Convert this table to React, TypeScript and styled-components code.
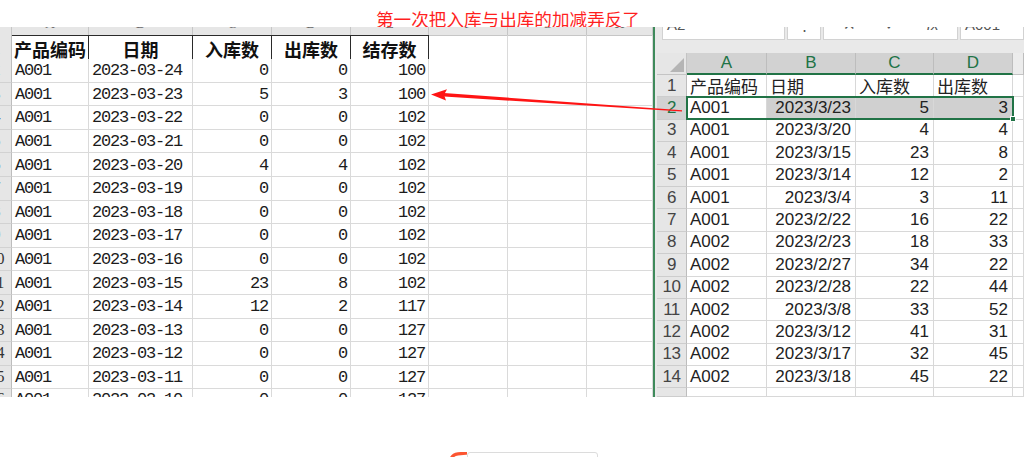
import React from "react";
import styled, { createGlobalStyle } from "styled-components";

const GlobalStyle = createGlobalStyle`
  html, body { margin: 0; padding: 0; background: #ffffff; }
  body { width: 1024px; height: 457px; overflow: hidden; font-family: "Liberation Sans", "Noto Sans CJK SC", sans-serif; }
  *, *::before, *::after { box-sizing: border-box; }
`;

const Page = styled.div`
  position: relative;
  width: 1024px;
  height: 457px;
  display: flex;
  flex-direction: column;
  background: #fff;
  overflow: hidden;
`;

const Caption = styled.div`
  height: 27px;
  flex: none;
  padding: 7px 0 0 376px;
  font-family: "Noto Sans CJK SC", sans-serif;
  font-size: 17.6px;
  line-height: 23px;
  color: #ff1f1f;
  white-space: nowrap;
`;

const Main = styled.div`
  display: flex;
  height: 370px;
  flex: none;
`;

/* ---------- left sheet ---------- */
const LeftSheet = styled.div`
  width: 653px;
  flex: none;
  overflow: hidden;
  background: #fff;
`;

const leftCols = "30px 77px 104px 79px 79px 78px 79px 79px 66px";

const LeftGrid = styled.div`
  margin-left: -18px;
  width: 671px;
  display: flex;
  flex-direction: column;
`;

const LRow = styled.div<{ $h: number }>`
  display: grid;
  grid-template-columns: ${leftCols};
  height: ${(p) => p.$h}px;
  flex: none;
  overflow: hidden;
`;

const LStripCell = styled.div`
  background: #e6e6e6;
  border-right: 1px solid #c6c6c6;
  overflow: hidden;
  display: flex;
  justify-content: center;
  align-items: flex-start;
  font-family: "Liberation Serif", serif;
  font-size: 14px;
  line-height: 14px;
  color: #6a6a6a;
  & > span { margin-top: -10px; }
`;

const LRowHead = styled.div`
  background: #e6e6e6;
  border-right: 1px solid #bdbdbd;
  border-bottom: 1px solid #d2d2d2;
  display: flex;
  align-items: center;
  justify-content: center;
  font-family: "Liberation Serif", serif;
  font-size: 16px;
  color: #333;
`;

const LHeadCell = styled.div<{ $boxed?: boolean }>`
  display: flex;
  align-items: center;
  justify-content: center;
  font-family: "Noto Sans CJK SC", sans-serif;
  font-weight: 700;
  font-size: 18px;
  color: #111;
  white-space: nowrap;
  border-top: 1px solid ${(p) => (p.$boxed ? "#2a2a2a" : "#c6c6c6")};
  border-right: 1px solid ${(p) => (p.$boxed ? "#2a2a2a" : "#dadada")};
  border-bottom: 1px solid ${(p) => (p.$boxed ? "#2a2a2a" : "#dadada")};
`;

const LCell = styled.div<{ $align?: "left" | "right" }>`
  display: flex;
  align-items: center;
  justify-content: ${(p) => (p.$align === "right" ? "flex-end" : "flex-start")};
  padding: 1px 3px 0 3px;
  border-right: 1px solid #dadada;
  border-bottom: 1px solid #dadada;
  font-family: "Liberation Mono", monospace;
  font-size: 17px;
  letter-spacing: -1.2px;
  color: #1c1c1c;
  white-space: nowrap;
`;

/* ---------- right panel ---------- */
const RightPanel = styled.div`
  flex: 1;
  height: 370px;
  border-left: 2px solid #3f8a5b;
  background: #e9e9e9;
  display: flex;
  flex-direction: column;
  padding-left: 7px;
  overflow: hidden;
`;

const FormulaBar = styled.div`
  display: flex;
  height: 13px;
  gap: 2px;
  flex: none;
`;

const BarBox = styled.div<{ $w?: number; $center?: boolean }>`
  width: ${(p) => (p.$w ? `${p.$w}px` : "auto")};
  flex: ${(p) => (p.$w ? "none" : 1)};
  background: #fff;
  border: 1px solid #d2d2d2;
  border-top: none;
  overflow: hidden;
  display: flex;
  align-items: flex-start;
  justify-content: ${(p) => (p.$center ? "space-around" : "flex-start")};
  padding: 0 4px;
  font-family: "Liberation Sans", sans-serif;
  font-size: 15px;
  line-height: 15px;
  color: #555;
  white-space: nowrap;
  & > span { margin-top: -10px; }
`;

const FxMark = styled.span`
  font-style: italic;
`;

const BarSpacer = styled.div`
  height: 13px;
  flex: none;
`;

const RGridWrap = styled.div`
  position: relative;
  margin-left: -5px;
  display: flex;
  flex-direction: column;
`;

const rightCols = "30px 80px 89px 78px 79px 1fr";

const RRow = styled.div<{ $h: number }>`
  display: grid;
  grid-template-columns: ${rightCols};
  height: ${(p) => p.$h}px;
  flex: none;
  overflow: hidden;
`;

const RCorner = styled.div`
  background: #e6e6e6;
  border-right: 1px solid #c4c4c4;
  border-bottom: 1px solid #c4c4c4;
  display: flex;
  align-items: flex-end;
  justify-content: flex-end;
  padding: 0 2px 2px 0;
`;

const RColHead = styled.div<{ $sel?: boolean }>`
  background: ${(p) => (p.$sel ? "#d2d2d2" : "#ececec")};
  color: ${(p) => (p.$sel ? "#217346" : "#444")};
  border-right: 1px solid #bdbdbd;
  border-bottom: ${(p) => (p.$sel ? "2px solid #217346" : "1px solid #c4c4c4")};
  display: flex;
  align-items: center;
  justify-content: center;
  font-family: "Liberation Sans", sans-serif;
  font-size: 17px;
`;

const RRowHead = styled.div<{ $sel?: boolean }>`
  background: ${(p) => (p.$sel ? "#d2d2d2" : "#e6e6e6")};
  color: ${(p) => (p.$sel ? "#217346" : "#444")};
  border-right: 1px solid #bdbdbd;
  border-bottom: 1px solid #cdcdcd;
  display: flex;
  align-items: center;
  justify-content: center;
  font-family: "Liberation Sans", sans-serif;
  font-size: 17px;
  letter-spacing: -0.5px;
`;

const RCell = styled.div<{ $align?: "left" | "right"; $sel?: boolean }>`
  background: ${(p) => (p.$sel ? "#d0d0d0" : "#ffffff")};
  border-right: 1px solid #d8d8d8;
  border-bottom: 1px solid #d8d8d8;
  display: flex;
  align-items: center;
  justify-content: ${(p) => (p.$align === "right" ? "flex-end" : "flex-start")};
  padding: 0 4px 0 3px;
  font-family: "Liberation Sans", "Noto Sans CJK SC", sans-serif;
  font-size: 17px;
  color: #222;
  white-space: nowrap;
  overflow: hidden;
`;

const Selection = styled.div`
  position: absolute;
  left: 29px;
  top: 43.4px;
  width: 328px;
  height: 23.6px;
  border: 2px solid #217346;
  pointer-events: none;
`;

const FillHandle = styled.div`
  position: absolute;
  right: -4px;
  bottom: -4px;
  width: 6px;
  height: 6px;
  background: #217346;
  border: 1px solid #fff;
`;

/* ---------- footer ---------- */
const Footer = styled.div`
  flex: 1;
  display: flex;
  align-items: flex-start;
  padding: 55px 0 0 448px;
`;

const Badge = styled.div`
  width: 131px;
  height: 22px;
  border: 1px solid #dcdcdc;
  border-radius: 3px;
  background: #fff;
`;

const ArrowLayer = styled.svg`
  position: absolute;
  left: 0;
  top: 0;
  pointer-events: none;
`;

/* ---------- data ---------- */
const leftLetters = ["", "A", "B", "C", "D", "E", "F", "G", "H"];
const leftHeaders = ["产品编码", "日期", "入库数", "出库数", "结存数"];
const leftData: [string, string, string, string][] = [
  ["2023-03-24", "0", "0", "100"],
  ["2023-03-23", "5", "3", "100"],
  ["2023-03-22", "0", "0", "102"],
  ["2023-03-21", "0", "0", "102"],
  ["2023-03-20", "4", "4", "102"],
  ["2023-03-19", "0", "0", "102"],
  ["2023-03-18", "0", "0", "102"],
  ["2023-03-17", "0", "0", "102"],
  ["2023-03-16", "0", "0", "102"],
  ["2023-03-15", "23", "8", "102"],
  ["2023-03-14", "12", "2", "117"],
  ["2023-03-13", "0", "0", "127"],
  ["2023-03-12", "0", "0", "127"],
  ["2023-03-11", "0", "0", "127"],
  ["2023-03-10", "0", "0", "127"],
];

const rightData: [string, string, string, string][] = [
  ["A001", "2023/3/23", "5", "3"],
  ["A001", "2023/3/20", "4", "4"],
  ["A001", "2023/3/15", "23", "8"],
  ["A001", "2023/3/14", "12", "2"],
  ["A001", "2023/3/4", "3", "11"],
  ["A001", "2023/2/22", "16", "22"],
  ["A002", "2023/2/23", "18", "33"],
  ["A002", "2023/2/27", "34", "22"],
  ["A002", "2023/2/28", "22", "44"],
  ["A002", "2023/3/8", "33", "52"],
  ["A002", "2023/3/12", "41", "31"],
  ["A002", "2023/3/17", "32", "45"],
  ["A002", "2023/3/18", "45", "22"],
];

export default function App() {
  return (
    <Page>
      <GlobalStyle />
      <Caption>第一次把入库与出库的加减弄反了</Caption>
      <Main>
        <LeftSheet>
          <LeftGrid>
            <LRow $h={8}>
              {leftLetters.map((l, i) => (
                <LStripCell key={i}>
                  <span>{l}</span>
                </LStripCell>
              ))}
            </LRow>
            <LRow $h={24}>
              <LRowHead>1</LRowHead>
              {leftHeaders.map((h) => (
                <LHeadCell key={h} $boxed>
                  {h}
                </LHeadCell>
              ))}
              <LHeadCell />
              <LHeadCell />
              <LHeadCell />
            </LRow>
            {leftData.map((r, i) => (
              <LRow key={i} $h={i === leftData.length - 1 ? 9 : 23.6}>
                <LRowHead>{i + 2}</LRowHead>
                <LCell>A001</LCell>
                <LCell>{r[0]}</LCell>
                <LCell $align="right">{r[1]}</LCell>
                <LCell $align="right">{r[2]}</LCell>
                <LCell $align="right">{r[3]}</LCell>
                <LCell />
                <LCell />
                <LCell />
              </LRow>
            ))}
          </LeftGrid>
        </LeftSheet>

        <RightPanel>
          <FormulaBar>
            <BarBox $w={123}>
              <span>A2</span>
            </BarBox>
            <BarBox $w={34} $center>
              <span>⋮</span>
            </BarBox>
            <BarBox $w={135} $center>
              <span>✕</span>
              <span>✓</span>
              <FxMark>fx</FxMark>
            </BarBox>
            <BarBox>
              <span>A001</span>
            </BarBox>
          </FormulaBar>
          <BarSpacer />
          <RGridWrap>
            <RRow $h={22}>
              <RCorner>
                <svg width="14" height="14" viewBox="0 0 14 14">
                  <polygon points="14,0 14,14 0,14" fill="#b5b5b5" />
                </svg>
              </RCorner>
              <RColHead $sel>A</RColHead>
              <RColHead $sel>B</RColHead>
              <RColHead $sel>C</RColHead>
              <RColHead $sel>D</RColHead>
              <RColHead />
            </RRow>
            <RRow $h={22.4}>
              <RRowHead>1</RRowHead>
              <RCell>产品编码</RCell>
              <RCell>日期</RCell>
              <RCell>入库数</RCell>
              <RCell>出库数</RCell>
              <RCell />
            </RRow>
            {rightData.map((r, i) => {
              const sel = i === 0;
              return (
                <RRow key={i} $h={22.4}>
                  <RRowHead $sel={sel}>{i + 2}</RRowHead>
                  <RCell>{r[0]}</RCell>
                  <RCell $align="right" $sel={sel}>
                    {r[1]}
                  </RCell>
                  <RCell $align="right" $sel={sel}>
                    {r[2]}
                  </RCell>
                  <RCell $align="right" $sel={sel}>
                    {r[3]}
                  </RCell>
                  <RCell />
                </RRow>
              );
            })}
            <RRow $h={9}>
              <RRowHead />
              <RCell />
              <RCell />
              <RCell />
              <RCell />
              <RCell />
            </RRow>
            <Selection>
              <FillHandle />
            </Selection>
          </RGridWrap>
        </RightPanel>
      </Main>

      <Footer>
        <svg width="19" height="10" viewBox="0 0 19 10">
          <path
            d="M2.5 9 Q3.5 2.5 10 1.8 L18 1.2"
            stroke="#fc5531"
            strokeWidth="3.2"
            fill="none"
            strokeLinecap="round"
          />
        </svg>
        <Badge />
      </Footer>

      <ArrowLayer width="1024" height="457" viewBox="0 0 1024 457">
        <polygon points="444,93 682,110.2 682,111.4 444,96.6" fill="#ff1414" />
        <polygon points="431,94.6 447,89.2 444,94.8 446,100.4" fill="#ff1414" />
      </ArrowLayer>
    </Page>
  );
}
